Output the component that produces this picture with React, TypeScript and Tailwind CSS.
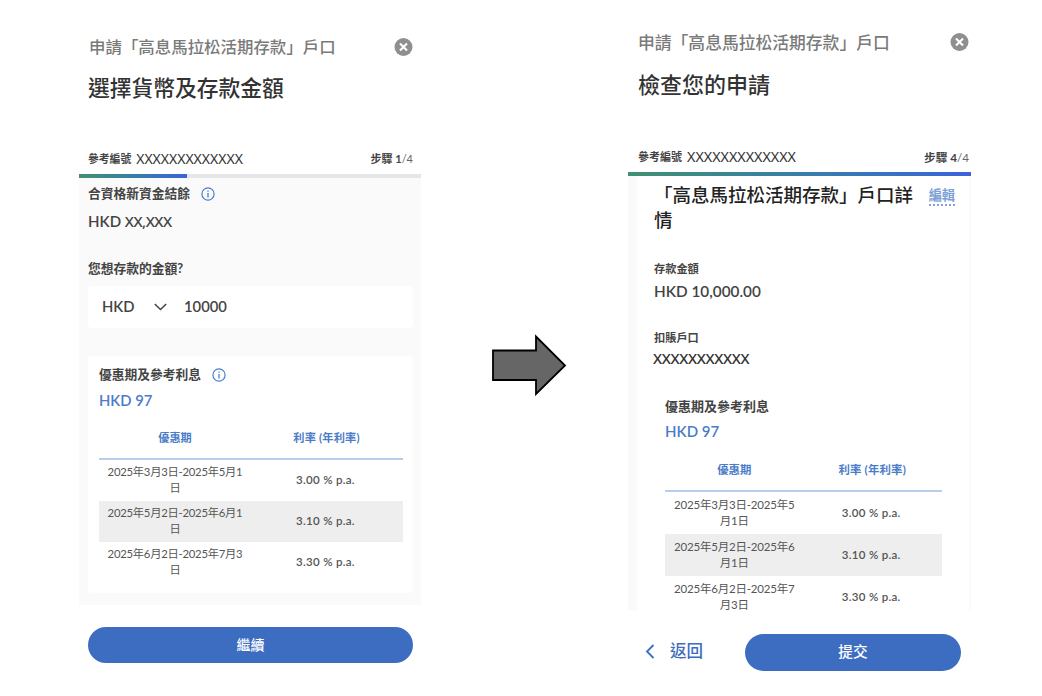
import type { ReactNode } from 'react';

type Rate = { period: string; rate: string };

const rates: Rate[] = [
  { period: '2025年3月3日-2025年5月1日', rate: '3.00 % p.a.' },
  { period: '2025年5月2日-2025年6月1日', rate: '3.10 % p.a.' },
  { period: '2025年6月2日-2025年7月3日', rate: '3.30 % p.a.' },
];

function CloseIcon() {
  return (
    <svg width="19" height="19" viewBox="0 0 19 19" className="shrink-0">
      <circle cx="9.5" cy="9" r="9" fill="#8f8f8f" />
      <path d="M6 5.5l7 7M13 5.5l-7 7" stroke="#fff" strokeWidth="2.1" />
    </svg>
  );
}

function InfoIcon() {
  return (
    <svg width="14" height="14" viewBox="0 0 14 14" className="shrink-0">
      <circle cx="7" cy="7" r="6.1" fill="none" stroke="#4a80cc" strokeWidth="1.2" />
      <path d="M7 6v4.4M7 3.4v1.4" stroke="#4a80cc" strokeWidth="1.3" />
    </svg>
  );
}

function Arrow() {
  return (
    <svg width="76" height="62" viewBox="0 0 76 62" className="shrink-0">
      <path
        d="M2 16.5H45V2.5L74 31.5L45 60V46H2Z"
        fill="#666"
        stroke="#000"
        strokeWidth="1.8"
      />
    </svg>
  );
}

function RateRow({ children, rate, shaded }: { children: ReactNode; rate: string; shaded: boolean }) {
  return (
    <div className={shaded ? 'grid grow grid-cols-2 bg-[#eeeeee]' : 'grid grow grid-cols-2'}>
      <div className="flex items-center justify-center text-center text-[#555]">{children}</div>
      <div className="flex items-center justify-center pr-[3px] pb-px text-[11.5px] font-semibold tracking-[0.3px] text-[#555]">
        {rate}
      </div>
    </div>
  );
}

function AmountStep() {
  return (
    <section className="flex w-[342px] flex-col pt-[30px]">
      <div className="flex h-[34px] items-center justify-between pr-[8px] pl-[10px]">
        <p className="text-[16.45px] font-medium text-[#7a7a7a]">申請「高息馬拉松活期存款」戶口</p>
        <CloseIcon />
      </div>
      <h1 className="mt-[7px] flex h-[34px] items-center pl-[9px] text-[21.75px] font-medium text-[#333]">
        選擇貨幣及存款金額
      </h1>
      <div className="mt-[44px] flex h-[20px] items-center pr-[8px] pl-[9px] text-[#444]">
        <span className="text-[10.8px] font-bold">參考編號</span>
        <span className="relative -top-px ml-[5px] font-['Noto_Sans'] text-[14px] text-[#333]">XXXXXXXXXXXXX</span>
        <span className="ml-auto pt-px text-[11px] font-bold">
          步驟 1<span className="font-normal text-[#666]">/4</span>
        </span>
      </div>
      <div className="mt-[5px] h-[4px] bg-[#e5e6ea]">
        <div className="h-full w-[108px] bg-linear-to-r from-[#42906f] to-[#3c62db]" />
      </div>

      <div className="flex h-[427px] flex-col bg-[#fafafa] pt-[6px] pr-[8px] pl-[9px]">
        <div className="flex h-[20px] items-center gap-[11px]">
          <span className="text-[12.75px] font-bold text-[#444]">合資格新資金結餘</span>
          <InfoIcon />
        </div>
        <p className="mt-[7px] h-[20px] text-[15px] leading-[20px] font-semibold text-[#444]">
          HKD <span className="font-['Noto_Sans'] text-[15px] font-medium tracking-[-0.5px]">XX,XXX</span>
        </p>
        <label className="mt-[27px] h-[20px] text-[12.75px] leading-[20px] font-bold text-[#444]">
          您想存款的金額?
        </label>
        <div className="mt-[8px] flex h-[42px] items-center rounded-[4px] bg-white pb-px pl-[14px] text-[14.8px] font-semibold text-[#444]">
          <span className="w-[52px]">HKD</span>
          <svg width="13" height="8" viewBox="0 0 13 8" fill="none" stroke="#444" strokeWidth="1.5">
            <path d="M.8 1l5.7 5.5L12.2 1" />
          </svg>
          <span className="ml-[17px]">10000</span>
        </div>

        <div className="mt-[28px] flex h-[237px] flex-col rounded-[4px] bg-white pt-[9px] pr-[10px] pl-[11px]">
          <div className="flex h-[20px] items-center gap-[11px]">
            <span className="text-[12.75px] font-bold text-[#444]">優惠期及參考利息</span>
            <InfoIcon />
          </div>
          <p className="mt-[5px] h-[20px] text-[14.8px] leading-[20px] font-semibold text-[#4b7cc8]">HKD 97</p>
          <div className="mt-[9px] grid h-[41px] grid-cols-2 items-center border-b-2 border-[#b8cdec] text-center text-[11.2px] font-bold text-[#4b7cc8]">
            <span>優惠期</span>
            <span className="pr-px tracking-[0.2px]">利率 (年利率)</span>
          </div>
          <div className="flex h-[123px] flex-col">
            {rates.map((r, i) => (
              <RateRow key={r.period} rate={r.rate} shaded={i === 1}>
                <span className="w-[142px] pb-px text-[11.3px] leading-[16px] tracking-[-0.25px] break-all">
                  {r.period}
                </span>
              </RateRow>
            ))}
          </div>
        </div>
      </div>

      <button className="mr-[8px] ml-[9px] mt-[22px] h-[36px] rounded-full bg-[#3d6dc0] pb-[2px] text-[14px] font-medium text-white">
        繼續
      </button>
    </section>
  );
}

function ReviewStep() {
  return (
    <section className="flex w-[343px] flex-col pt-[25px]">
      <div className="flex h-[34px] items-center justify-between pr-[2px] pl-[10px]">
        <p className="pt-px text-[16.8px] font-medium text-[#7a7a7a]">申請「高息馬拉松活期存款」戶口</p>
        <CloseIcon />
      </div>
      <h1 className="mt-[8px] flex h-[34px] items-center pl-[10px] text-[22px] font-medium text-[#333]">檢查您的申請</h1>
      <div className="mt-[46px] flex h-[20px] items-center pr-[2px] pl-[10px] text-[#444]">
        <span className="text-[11px] font-bold">參考編號</span>
        <span className="ml-[5px] font-['Noto_Sans'] text-[14.3px] text-[#333]">XXXXXXXXXXXXX</span>
        <span className="ml-auto pt-px text-[11.7px] font-bold">
          步驟 4<span className="font-normal text-[#666]">/4</span>
        </span>
      </div>
      <div className="mt-[5px] h-[4px] bg-linear-to-r from-[#42906f] to-[#3c62db]" />

      <div className="h-[435px] overflow-hidden bg-[#fafafa] pr-[2px] pl-[9px]">
        <div className="flex h-full flex-col bg-white pt-[7px] pl-[17px]">
          <div className="flex items-start justify-between pr-[14px] text-[#333]">
            <h2 className="w-[261px] text-[18.5px] leading-[24.5px] font-medium break-all text-[#222]">
              「高息馬拉松活期存款」戶口詳情
            </h2>
            <a className="mt-[3px] border-b-2 border-dotted border-[#7fa3da] text-[13.2px] leading-[18px] font-bold text-[#7b9fd6]">
              編輯
            </a>
          </div>
          <p className="mt-[27px] h-[20px] text-[11.2px] leading-[20px] font-bold text-[#444]">存款金額</p>
          <p className="mt-[2px] h-[20px] text-[15.3px] leading-[20px] font-semibold text-[#444]">HKD 10,000.00</p>
          <p className="mt-[27px] h-[20px] text-[11.2px] leading-[20px] font-bold text-[#444]">扣賬戶口</p>
          <p className="-ml-px h-[20px] font-['Noto_Sans'] text-[14.9px] leading-[20px] font-medium tracking-[-0.35px] text-[#333]">
            XXXXXXXXXXX
          </p>

          <div className="mt-[28px] w-[288px] pl-[11px]">
            <p className="h-[20px] text-[13px] leading-[20px] font-bold text-[#444]">優惠期及參考利息</p>
            <p className="mt-[5px] h-[20px] text-[15px] leading-[20px] font-semibold text-[#4b7cc8]">HKD 97</p>
            <div className="mt-[9px] grid h-[42px] grid-cols-2 items-center border-b-2 border-[#b8cdec] text-center text-[11.4px] font-bold text-[#4b7cc8]">
              <span>優惠期</span>
              <span className="pr-px tracking-[0.2px]">利率 (年利率)</span>
            </div>
            <div className="flex h-[126px] flex-col">
              {rates.map((r, i) => (
                <RateRow key={r.period} rate={r.rate} shaded={i === 1}>
                  <span className="w-[126px] pb-px text-[11.5px] leading-[16px] tracking-[-0.2px] break-all">
                    {r.period}
                  </span>
                </RateRow>
              ))}
            </div>
          </div>
        </div>
      </div>

      <div className="mt-[23px] flex h-[37px] items-center pr-[10px] pl-[17px]">
        <svg width="10" height="15" viewBox="0 0 10 15" fill="none" stroke="#3d6dc0" strokeWidth="1.8" className="mb-[3px]">
          <path d="M8.5 1L2 7.5L8.5 14" />
        </svg>
        <span className="ml-[15px] pb-[3px] text-[16.5px] font-medium text-[#3d6dc0]">返回</span>
        <button className="ml-auto h-full w-[216px] rounded-full bg-[#3d6dc0] pb-[2px] text-[14.7px] font-medium text-white">
          提交
        </button>
      </div>
    </section>
  );
}

export default function App() {
  return (
    <main className="flex h-[696px] w-[1042px] overflow-hidden bg-white pl-[79px] font-['Lato','Noto_Sans_CJK_TC',sans-serif]">
      <AmountStep />
      <div className="w-[207px] pt-[334px] pl-[70px]">
        <Arrow />
      </div>
      <ReviewStep />
    </main>
  );
}
